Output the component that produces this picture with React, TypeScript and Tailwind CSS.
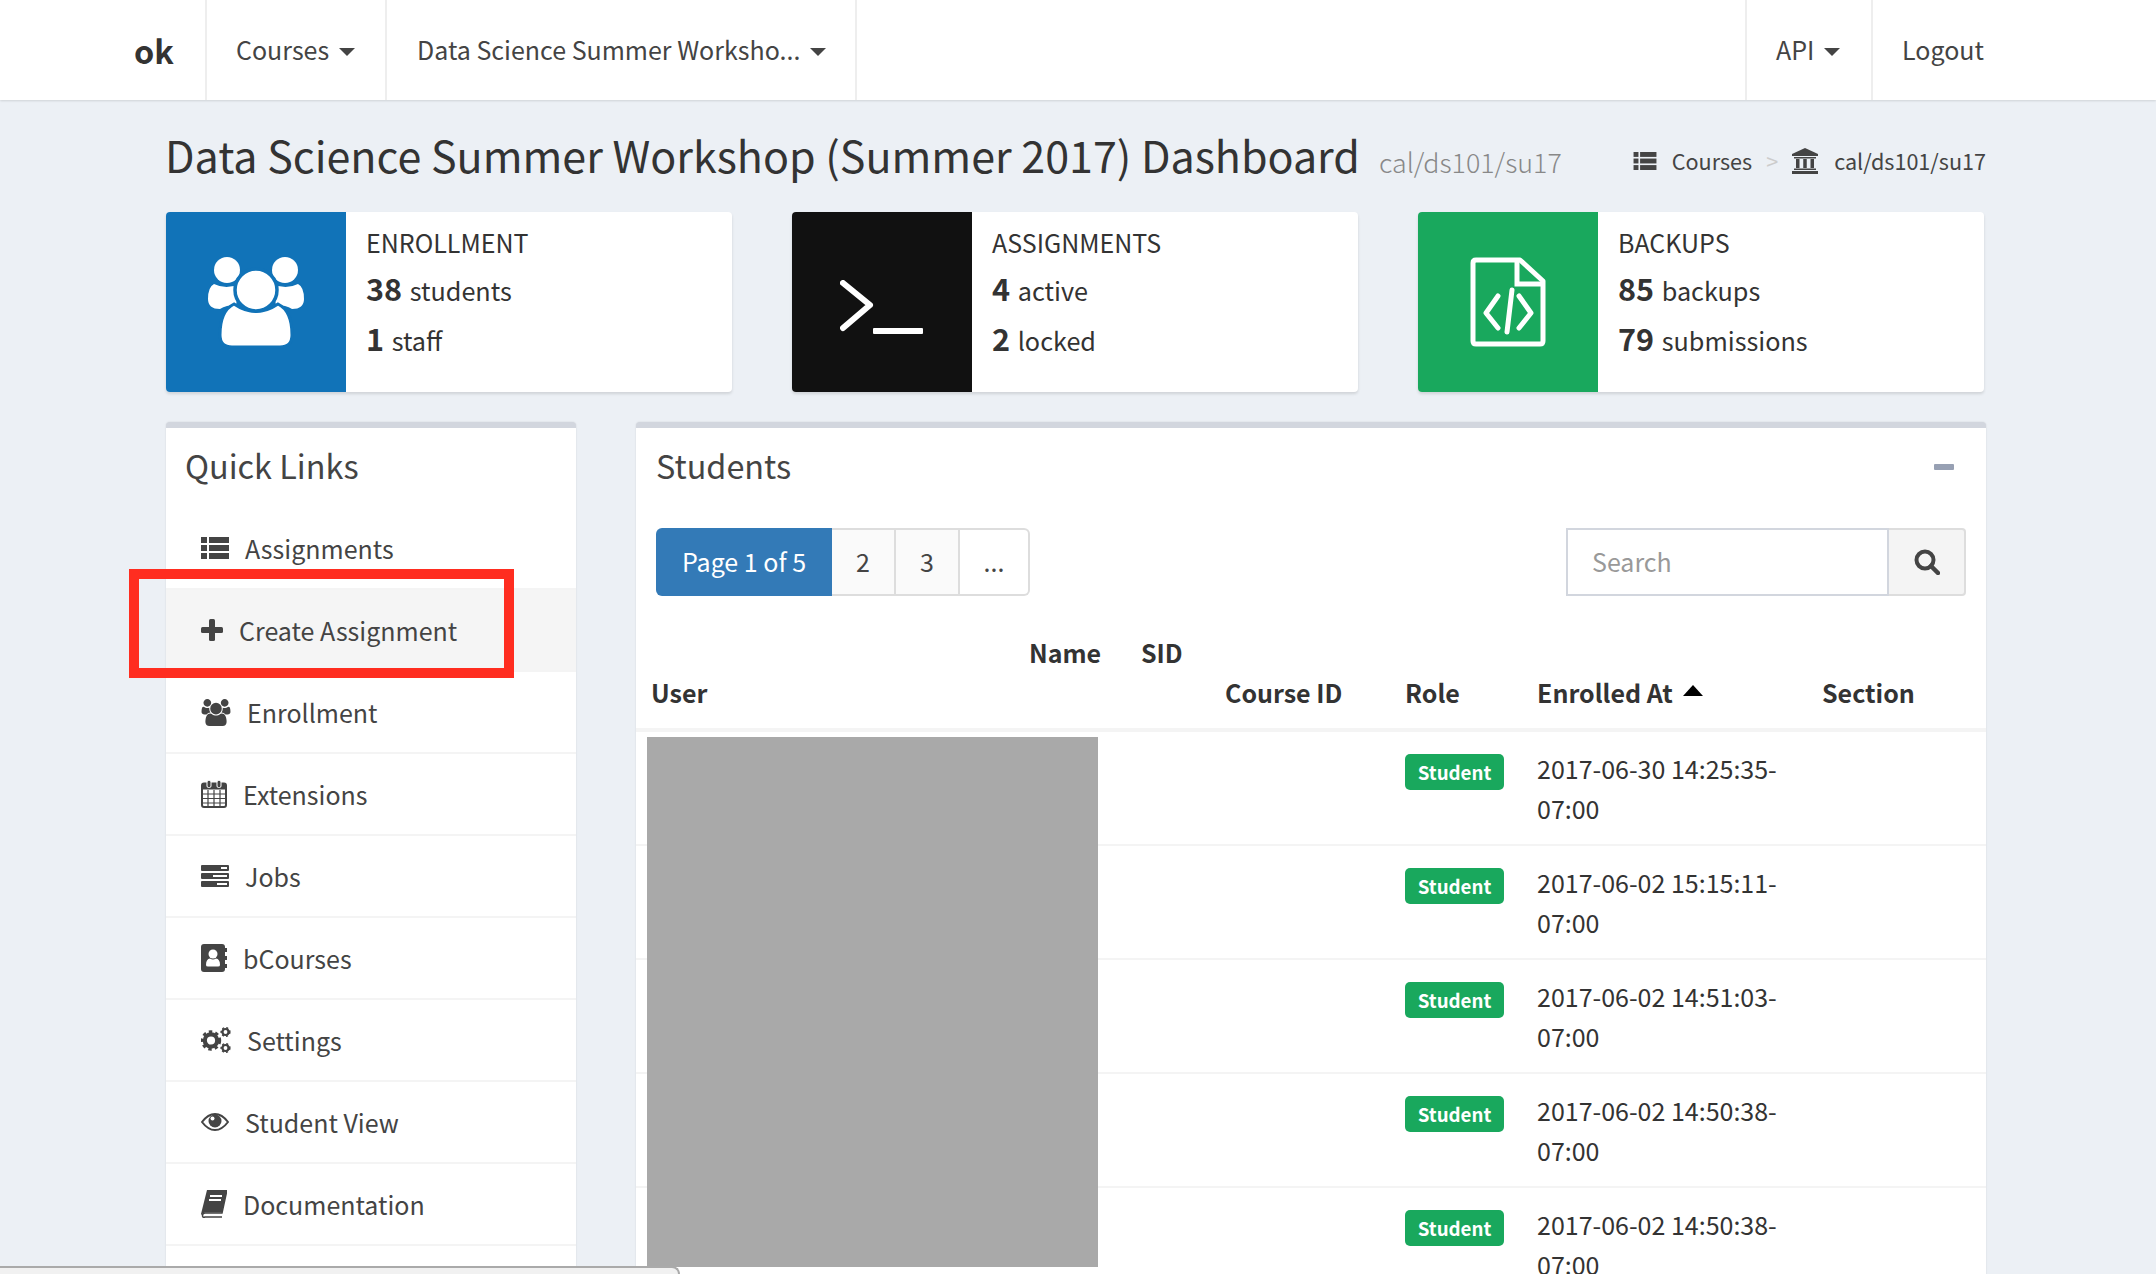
import type { ReactNode } from "react"

const font = { fontFamily: '"Noto Sans CJK SC", "Noto Sans", sans-serif' }

function Caret() {
	return <span className="ml-[10px] inline-block h-0 w-0 translate-y-[2px] border-x-[8px] border-t-[8px] border-x-transparent border-t-[#444] align-middle" />
}

function ThList({ className }: { className?: string }) {
	return (
		<svg viewBox="0 0 28 22" className={className} fill="#444">
			{[0, 8, 16].map((y) => (
				<g key={y}>
					<rect x="0" y={y} width="6" height="6" />
					<rect x="8" y={y} width="20" height="6" />
				</g>
			))}
		</svg>
	)
}

function PlusIcon() {
	return (
		<svg viewBox="0 0 22 22" className="h-[22px] w-[22px]" fill="#444">
			<rect x="8" y="0" width="6" height="22" rx="1.5" />
			<rect x="0" y="8" width="22" height="6" rx="1.5" />
		</svg>
	)
}

function UsersIcon() {
	return (
		<svg viewBox="0 0 1920 1792" className="h-[27px] w-[30px]" fill="#444">
			<path d="M593 896q-162 5-265 128h-134q-82 0-138-40.5t-56-118.5q0-353 124-353 6 0 43.5 21t97.5 42.5 119 21.5q67 0 133-23-5 37-5 66 0 139 81 256zm1071 637q0 120-73 189.5t-194 69.5h-874q-121 0-194-69.5t-73-189.5q0-53 3.5-103.5t14-109 26.5-108.5 43-97.5 62-81 85.5-53.5 111.5-20q10 0 43 21.5t73 48 107 48 135 21.5 135-21.5 107-48 73-48 43-21.5q61 0 111.5 20t85.5 53.5 62 81 43 97.5 26.5 108.5 14 109 3.5 103.5zm-1024-1277q0 106-75 181t-181 75-181-75-75-181 75-181 181-75 181 75 75 181zm704 384q0 159-112.5 271.5t-271.5 112.5-271.5-112.5-112.5-271.5 112.5-271.5 271.5-112.5 271.5 112.5 112.5 271.5zm576 225q0 78-56 118.5t-138 40.5h-134q-103-123-265-128 81-117 81-256 0-29-5-66 66 23 133 23 59 0 119-21.5t97.5-42.5 43.5-21q124 0 124 353zm-128-609q0 106-75 181t-181 75-181-75-75-181 75-181 181-75 181 75 75 181z" />
		</svg>
	)
}

function CalendarIcon() {
	return (
		<svg viewBox="0 0 26 28" className="h-[28px] w-[26px]">
			<rect x="1" y="3.5" width="24" height="23.5" rx="2" fill="none" stroke="#444" strokeWidth="2" />
			<rect x="1" y="3.5" width="24" height="6" fill="#444" />
			<path d="M2 14h22M2 18.5h22M2 23h22M7 10v16M13 10v16M19 10v16" stroke="#444" strokeWidth="1.2" />
			<rect x="6" y="0.5" width="4" height="7" rx="1.5" fill="#444" stroke="#fff" strokeWidth="1" />
			<rect x="16" y="0.5" width="4" height="7" rx="1.5" fill="#444" stroke="#fff" strokeWidth="1" />
		</svg>
	)
}

function JobsIcon() {
	return (
		<svg viewBox="0 0 28 22" className="h-[22px] w-[28px]">
			{[0, 8, 16].map((y) => (
				<g key={y}>
					<rect x="0" y={y} width="28" height="6" rx="1" fill="#444" />
				</g>
			))}
			<rect x="20" y="2" width="6" height="2" fill="#fff" />
			<rect x="12" y="10" width="14" height="2" fill="#fff" />
			<rect x="16" y="18" width="10" height="2" fill="#fff" />
		</svg>
	)
}

function AddressBookIcon() {
	return (
		<svg viewBox="0 0 26 28" className="h-[28px] w-[26px]" fill="#444">
			<rect x="0" y="0" width="24" height="28" rx="3" />
			<rect x="24" y="4" width="2" height="4" />
			<rect x="24" y="12" width="2" height="4" />
			<rect x="24" y="20" width="2" height="4" />
			<circle cx="12" cy="10" r="4.5" fill="#fff" />
			<path d="M5 21q0-6 4-6.5q3 2 6 0q4 .5 4 6.5q0 1.5-2 1.5H7q-2 0-2-1.5z" fill="#fff" />
		</svg>
	)
}

function Gear({ cx, cy, r, width, dash }: { cx: number; cy: number; r: number; width: number; dash: string }) {
	return (
		<g fill="none" stroke="#444">
			<circle cx={cx} cy={cy} r={r} strokeWidth={width} />
			<circle cx={cx} cy={cy} r={r + width * 0.6} strokeWidth={width * 0.7} strokeDasharray={dash} />
		</g>
	)
}

function CogsIcon() {
	return (
		<svg viewBox="0 0 30 28" className="h-[28px] w-[30px]">
			<Gear cx={10} cy={14.5} r={6.2} width={4.2} dash="3.4 3.05" />
			<Gear cx={24.5} cy={6} r={3} width={2.2} dash="2 2.12" />
			<Gear cx={24.5} cy={22} r={3} width={2.2} dash="2 2.12" />
		</svg>
	)
}

function EyeIcon() {
	return (
		<svg viewBox="0 0 28 20" className="h-[20px] w-[28px]">
			<path d="M1 10Q7 2 14 2T27 10Q21 18 14 18T1 10z" fill="none" stroke="#444" strokeWidth="2" />
			<circle cx="14" cy="9" r="6.5" fill="#444" />
			<circle cx="11.5" cy="6.5" r="2" fill="#fff" />
		</svg>
	)
}

function BookIcon() {
	return (
		<svg viewBox="0 0 26 28" className="h-[28px] w-[26px]">
			<path d="M6 0H26L21 23H4Q1.5 23 1.5 25.5T4 27H21" fill="none" stroke="#444" strokeWidth="1.5" />
			<path d="M6 0H26L21 22.5H4Q1 23 0.5 25L0 24Z" fill="#444" />
			<path d="M9 6H21M8 10H20" stroke="#fff" strokeWidth="1.8" />
		</svg>
	)
}

function BankIcon() {
	return (
		<svg viewBox="0 0 26 26" className="h-[26px] w-[26px]" fill="#444">
			<path d="M13 0L26 6V8H0V6Z" />
			<rect x="2" y="9" width="22" height="1.5" />
			<rect x="4" y="11" width="3.5" height="9" />
			<rect x="11.25" y="11" width="3.5" height="9" />
			<rect x="18.5" y="11" width="3.5" height="9" />
			<rect x="2" y="20.5" width="22" height="1.5" />
			<rect x="0" y="23" width="26" height="3" />
		</svg>
	)
}

function PeopleIcon() {
	return (
		<svg viewBox="0 0 100 95" className="h-[95px] w-[100px]">
			<circle cx="21" cy="15" r="13" fill="#fff" />
			<circle cx="79" cy="15" r="13" fill="#fff" />
			<path d="M8 29Q20 35 34 29L30 50Q20 50 14 54Q2 54 2 44Q2 32 8 29z" fill="#fff" />
			<path d="M92 29Q80 35 66 29L70 50Q80 50 86 54Q98 54 98 44Q98 32 92 29z" fill="#fff" />
			<path d="M28 49Q50 64 72 49Q86 56 86 80Q86 92 74 92H26Q14 92 14 80Q14 56 28 49z" fill="#fff" stroke="#1173b8" strokeWidth="3" />
			<circle cx="50" cy="35" r="21" fill="#fff" stroke="#1173b8" strokeWidth="3.5" />
		</svg>
	)
}

function TerminalIcon() {
	return (
		<svg viewBox="0 0 84 54" className="mt-[10px] h-[54px] w-[84px]" fill="none" stroke="#fff">
			<path d="M3 3L30 25L3 48" strokeWidth="6" strokeLinecap="round" strokeLinejoin="round" />
			<rect x="33" y="48" width="50" height="6" rx="1" fill="#fff" stroke="none" />
		</svg>
	)
}

function FileCodeIcon() {
	return (
		<svg viewBox="0 0 76 90" className="h-[90px] w-[76px]" fill="none" stroke="#fff" strokeWidth="5">
			<path d="M3 6Q3 3 6 3H50L73 24V84Q73 87 70 87H6Q3 87 3 84Z" strokeLinejoin="round" />
			<path d="M47 3V27H73" />
			<path d="M28 39L16 56L28 71M49 39L61 56L49 71M42 33L37 75" strokeWidth="5" strokeLinecap="round" strokeLinejoin="round" />
		</svg>
	)
}

function SearchIcon() {
	return (
		<svg viewBox="0 0 26 26" className="h-[26px] w-[26px]" fill="none" stroke="#444">
			<circle cx="11" cy="11" r="8.5" strokeWidth="4" />
			<path d="M17 17L24 24" strokeWidth="4.5" strokeLinecap="round" />
		</svg>
	)
}

type StatCardProps = {
	color: string
	icon: ReactNode
	title: string
	lines: [string, string][]
}

function StatCard({ color, icon, title, lines }: StatCardProps) {
	return (
		<div className="flex h-[180px] overflow-hidden rounded-[4px] bg-white shadow-[0_2px_3px_rgba(0,0,0,0.12)]">
			<div className={`flex w-[180px] shrink-0 items-center justify-center ${color}`}>{icon}</div>
			<div className="pl-5 pt-[10px] text-[#333]">
				<div className="text-[25px] leading-[40px]">{title}</div>
				{lines.map(([n, label]) => (
					<div key={label} className="mt-[5px] text-[25.2px] leading-[42px] last:mt-[6px]">
						<span className="mr-[2px] text-[30.6px] font-bold">{n}</span> {label}
					</div>
				))}
			</div>
		</div>
	)
}

const links: { label: string; icon: ReactNode; active?: boolean }[] = [
	{ label: "Assignments", icon: <ThList className="h-[22px] w-[28px]" /> },
	{ label: "Create Assignment", icon: <PlusIcon />, active: true },
	{ label: "Enrollment", icon: <UsersIcon /> },
	{ label: "Extensions", icon: <CalendarIcon /> },
	{ label: "Jobs", icon: <JobsIcon /> },
	{ label: "bCourses", icon: <AddressBookIcon /> },
	{ label: "Settings", icon: <CogsIcon /> },
	{ label: "Student View", icon: <EyeIcon /> },
	{ label: "Documentation", icon: <BookIcon /> },
	{ label: "", icon: null },
]

const rows = [
	["2017-06-30 14:25:35-", "07:00"],
	["2017-06-02 15:15:11-", "07:00"],
	["2017-06-02 14:51:03-", "07:00"],
	["2017-06-02 14:50:38-", "07:00"],
	["2017-06-02 14:50:38-", "07:00"],
]

function NavItem({ children, className }: { children: ReactNode; className?: string }) {
	return <div className={`flex h-full items-center border-l-2 border-[#eee] ${className ?? ""}`}>{children}</div>
}

export default function App() {
	return (
		<div style={font} className="relative h-[1274px] w-[2156px] overflow-hidden bg-[#ecf0f5] text-[#444]">
			<nav className="flex h-[100px] items-center whitespace-nowrap bg-white text-[25px] shadow-[0_1px_2px_rgba(0,0,0,0.12)]">
				<div className="w-[205px] pl-[134px] text-[32.4px] font-bold text-[#333]">ok</div>
				<NavItem className="w-[180px] pl-[29px]">
					Courses
					<Caret />
				</NavItem>
				<NavItem className="w-[472px] border-r-2 pl-[30px]">
					Data Science Summer Worksho...
					<Caret />
				</NavItem>
				<div className="flex-1" />
				<NavItem className="w-[126px] pl-[29px]">
					API
					<Caret />
				</NavItem>
				<NavItem className="w-[285px] pl-[29px]">Logout</NavItem>
			</nav>

			<div className="ml-[166px] w-[1820px]">
				<header className="flex h-[112px] items-baseline justify-between whitespace-nowrap pt-[24px]">
					<h1 className="-ml-[1px] text-[43px] leading-[60px] text-[#333]">
						Data Science Summer Workshop (Summer 2017) Dashboard
						<small className="ml-[19px] text-[26.8px] font-light text-[#888]">cal/ds101/su17</small>
					</h1>
					<div className="-ml-[2px] flex -translate-y-[3px] items-center text-[21.6px] text-[#444]">
						<ThList className="mr-[15px] h-[18px] w-[24px]" />
						Courses
						<span className="mx-[14px] text-[#ccc]">&gt;</span>
						<BankIcon />
						<span className="ml-[16px]">cal/ds101/su17</span>
					</div>
				</header>

				<div className="grid w-[1818px] grid-cols-3 gap-[60px]">
					<StatCard
						color="bg-[#1173b8]"
						icon={<PeopleIcon />}
						title="ENROLLMENT"
						lines={[
							["38", "students"],
							["1", "staff"],
						]}
					/>
					<StatCard
						color="bg-[#111111]"
						icon={<TerminalIcon />}
						title="ASSIGNMENTS"
						lines={[
							["4", "active"],
							["2", "locked"],
						]}
					/>
					<StatCard
						color="bg-[#19a85d]"
						icon={<FileCodeIcon />}
						title="BACKUPS"
						lines={[
							["85", "backups"],
							["79", "submissions"],
						]}
					/>
				</div>

				<div className="mt-[30px] grid grid-cols-[410px_1350px] gap-[60px]">
					<section className="rounded-[4px] border-t-[6px] border-[#d2d6de] bg-white shadow-[0_0_2px_rgba(0,0,0,0.12)]">
						<h3 className="flex h-[80px] items-center pb-[6px] pl-[19px] text-[32.4px]">Quick Links</h3>
						<ul>
							{links.map((link) => (
								<li
									key={link.label}
									className={`flex h-[82px] items-center gap-4 border-b-2 border-[#f4f4f4] pl-[35px] text-[25px] ${link.active ? "bg-[#f5f5f5]" : ""}`}
								>
									{link.icon}
									<span className="pt-[2px]">{link.label}</span>
								</li>
							))}
						</ul>
					</section>

					<section className="rounded-[4px] border-t-[6px] border-[#d2d6de] bg-white shadow-[0_0_2px_rgba(0,0,0,0.12)]">
						<div className="flex h-[80px] items-center justify-between pl-[20px] pr-[32px]">
							<h3 className="pb-[6px] text-[32.4px]">Students</h3>
							<div className="mb-[2px] h-[6px] w-[20px] rounded-[1px] bg-[#97a0b3]" />
						</div>
						<div className="mt-[20px] flex items-stretch justify-between pl-[20px] pr-[20px]">
							<div className="flex h-[68px] text-[25px]">
								<div className="flex w-[176px] items-center justify-center rounded-l-[6px] bg-[#337ab7] text-white">Page 1 of 5</div>
								<div className="flex w-[64px] items-center justify-center border-y-2 border-r-2 border-[#ddd] bg-[#fafafa]">2</div>
								<div className="flex w-[64px] items-center justify-center border-y-2 border-r-2 border-[#ddd] bg-[#fafafa]">3</div>
								<div className="flex w-[70px] items-center justify-center rounded-r-[6px] border-y-2 border-r-2 border-[#ddd] bg-white">...</div>
							</div>
							<div className="flex h-[68px] w-[400px] text-[25px]">
								<div className="flex flex-1 items-center border-2 border-[#d2d6de] pl-6 text-[#999]">Search</div>
								<div className="flex w-[77px] items-center justify-center rounded-r-[4px] border-y-2 border-r-2 border-[#ddd] bg-[#f4f4f4]">
									<SearchIcon />
								</div>
							</div>
						</div>

						<table className="mt-[36px] w-[1350px] table-fixed border-collapse text-left text-[25px] leading-[40px] text-[#333]">
							<colgroup>
								<col className="w-[382px]" />
								<col className="w-[112px]" />
								<col className="w-[84px]" />
								<col className="w-[180px]" />
								<col className="w-[131px]" />
								<col className="w-[286px]" />
								<col className="w-[175px]" />
							</colgroup>
							<thead>
								<tr className="border-b-4 border-[#f4f4f4] align-bottom">
									<th className="pb-[16px] pl-[15px] font-bold">User</th>
									<th className="pb-[56px] pl-[11px] font-bold">Name</th>
									<th className="pb-[56px] pl-[11px] font-bold">SID</th>
									<th className="pb-[16px] pl-[11px] font-bold">Course ID</th>
									<th className="pb-[16px] pl-[11px] font-bold">Role</th>
									<th className="pb-[16px] pl-[12px] font-bold">
										Enrolled At
										<span className="ml-[10px] inline-block h-0 w-0 -translate-y-[6px] border-x-[10px] border-b-[11px] border-x-transparent border-b-black align-middle" />
									</th>
									<th className="pb-[16px] pl-[11px] font-bold">Section</th>
								</tr>
							</thead>
							<tbody>
								{rows.map((lines, i) => (
									<tr key={i} className="border-b-2 border-[#f4f4f4] align-top">
										<td />
										<td />
										<td />
										<td />
										<td className="pl-[11px] pt-[22px]">
											<span className="flex h-[36px] w-[99px] items-center justify-center rounded-[5px] bg-[#19a85d] text-[18.7px] font-bold text-white">Student</span>
										</td>
										<td className="pb-[16px] pl-[12px] pt-[16px]">
											{lines[0]}
											<br />
											{lines[1]}
										</td>
										<td />
									</tr>
								))}
							</tbody>
						</table>
					</section>
				</div>
			</div>

			{/* redaction block over the user column */}
			<div className="absolute left-[647px] top-[737px] h-[530px] w-[451px] bg-[#a9a9a9]" />
			{/* edge of a window lying over the page */}
			<div className="absolute left-0 top-[1266px] h-[8px] w-[680px] rounded-tr-[8px] border-r-2 border-t-2 border-[#aaa] bg-[#f1f1f1]" />
			{/* annotation box around the Create Assignment link */}
			<div className="absolute left-[129px] top-[569px] h-[109px] w-[385px] border-[10px] border-[#ff2d20]" />
		</div>
	)
}
